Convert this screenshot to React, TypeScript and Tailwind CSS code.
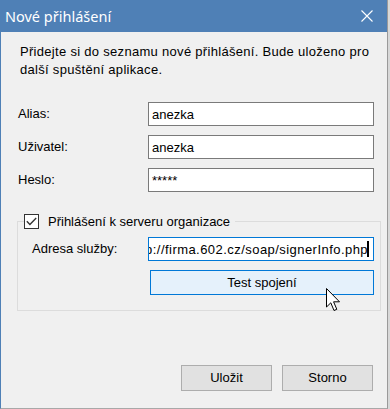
import { useState } from "react";

const font = { fontFamily: '"Liberation Sans", Arial, sans-serif' };

const fields = [
  { label: "Alias:", value: "anezka" },
  { label: "Uživatel:", value: "anezka" },
  { label: "Heslo:", value: "*****" },
];

const CloseIcon = () => (
  <svg width="12" height="12" viewBox="0 0 12 12" className="block">
    <path d="M0.5 0.5 L11.5 11.5 M11.5 0.5 L0.5 11.5" stroke="#fff" strokeWidth="1.1" />
  </svg>
);

const Cursor = () => (
  <svg width="15" height="24" viewBox="0 0 15 24" className="block">
    <path
      d="M0.5 0.5 L0.5 19 L4.8 14.8 L8 22.5 L10.8 21.3 L7.6 13.8 L13.5 13.8 Z"
      fill="#fff"
      stroke="#000"
      strokeWidth="1"
      strokeLinejoin="miter"
    />
  </svg>
);

const App = () => {
  const [checked, setChecked] = useState(true);

  return (
    <div className="w-[390px] h-[409px] bg-[#d8d8d8] overflow-hidden" style={font}>
      <div className="w-[388px] h-[409px] flex flex-col bg-[#f0f0f0] border-l border-l-[#4f80b6] border-r border-r-[#9a9a9a] border-b border-b-[#a8a8a8]">
        {/* title bar */}
        <div className="h-[32px] shrink-0 bg-[#4f80b6] flex items-center justify-between pl-[5px] pr-[14px] -ml-px">
          <span className="text-white text-[14.5px] leading-none" style={{ fontFamily: '"Noto Sans", "Open Sans", sans-serif' }}>
            Nové přihlášení
          </span>
          <CloseIcon />
        </div>

        <div className="flex flex-col pl-[16px] pr-[11px] text-[13px] text-black">
          <p className="ml-[3px] mt-[11px] w-[356px] leading-[18px] tracking-[0.3px]">
            Přidejte si do seznamu nové přihlášení. Bude uloženo pro další spuštění aplikace.
          </p>

          <div className="mt-[23px] flex flex-col gap-[9px]">
            {fields.map((f) => (
              <div key={f.label} className="flex items-center">
                <span className="w-[131px] pl-[1px]">{f.label}</span>
                <div className="w-[226px] h-[24px] bg-white border border-[#7a7a7a] flex items-center pl-[3px] leading-none">
                  {f.value}
                </div>
              </div>
            ))}
          </div>

          <fieldset className="mt-[21px] w-[364px] border border-[#dcdcdc] pl-[14px] pb-[15px]">
            <legend className="-ml-[8px] pr-[5px] flex items-center gap-[9px] h-[17px]">
              <button
                type="button"
                onClick={() => setChecked(!checked)}
                className="w-[15px] h-[15px] bg-white border border-[#333333] flex items-center justify-center"
              >
                {checked && (
                  <svg width="11" height="9" viewBox="0 0 11 9" className="block">
                    <path d="M0.8 4.3 L3.9 7.4 L10.2 1" stroke="#333" strokeWidth="1.4" fill="none" />
                  </svg>
                )}
              </button>
              <span>Přihlášení k serveru organizace</span>
            </legend>

            <div className="mt-[7px] flex items-center">
              <span className="w-[116px]">Adresa služby:</span>
              <div className="w-[226px] h-[24px] bg-white border border-[#0078d7] flex items-center justify-end overflow-hidden pr-[5px] relative leading-none whitespace-nowrap tracking-[0.45px]">
                <span>http://firma.602.cz/soap/signerInfo.php</span>
                <span className="absolute right-[4px] top-[3px] w-[2px] h-[16px] bg-black" />
              </div>
            </div>

            <div className="mt-[9px] ml-[118px] relative w-[224px]">
              <div className="h-[25px] bg-[#e5f1fb] border border-[#0078d7] flex items-center justify-center">
                Test spojení
              </div>
              <div className="absolute left-[176px] top-[18px]">
                <Cursor />
              </div>
            </div>
          </fieldset>

          <div className="mt-[54px] flex justify-end gap-[10px] pr-[3px]">
            <button type="button" className="w-[91px] h-[26px] bg-[#e1e1e1] border border-[#adadad] text-black">
              Uložit
            </button>
            <button type="button" className="w-[91px] h-[26px] bg-[#e1e1e1] border border-[#adadad] text-black">
              Storno
            </button>
          </div>
        </div>
      </div>
    </div>
  );
};

export default App;
